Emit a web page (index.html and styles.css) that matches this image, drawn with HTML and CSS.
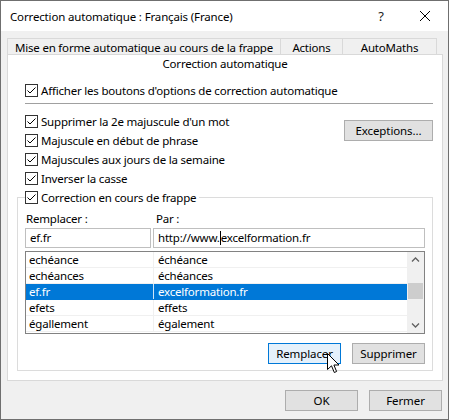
FILE: index.html
```html
<!DOCTYPE html>
<html>
<head>
    <meta charset="utf-8">
    <title>Correction automatique</title>
    <link rel="stylesheet" href="styles.css">
</head>
<body>
  <div class="window">
    <div class="titlebar">
      <span class="title">Correction automatique : Français (France)</span>
      <span class="help">?</span>
      <svg class="close" width="12" height="12" viewBox="0 0 12 12">
        <path d="M1 1 L11 11 M11 1 L1 11" stroke="#000" stroke-width="1" fill="none"/>
      </svg>
    </div>

    <div class="dialog-body">
      <div class="tab-row">
        <div class="tab tab-wide">Mise en forme automatique au cours de la frappe</div>
        <div class="tab tab-actions">Actions</div>
        <div class="tab tab-maths">AutoMaths</div>
      </div>

      <div class="panel">
        <div class="tab-current">Correction automatique</div>

        <label class="check check-top">
          <svg class="cb" width="13" height="13" viewBox="0 0 13 13"><rect x="0.5" y="0.5" width="12" height="12" fill="#fff" stroke="#333"/><path d="M2.5 6.5 L5 9 L10.5 3.5" stroke="#000" fill="none"/></svg>
          Afficher les boutons d'options de correction automatique
        </label>
        <div class="separator"></div>

        <div class="options">
          <div class="option-list">
            <label class="check">
              <svg class="cb" width="13" height="13" viewBox="0 0 13 13"><rect x="0.5" y="0.5" width="12" height="12" fill="#fff" stroke="#333"/><path d="M2.5 6.5 L5 9 L10.5 3.5" stroke="#000" fill="none"/></svg>
              Supprimer la 2e majuscule d'un mot
            </label>
            <label class="check">
              <svg class="cb" width="13" height="13" viewBox="0 0 13 13"><rect x="0.5" y="0.5" width="12" height="12" fill="#fff" stroke="#333"/><path d="M2.5 6.5 L5 9 L10.5 3.5" stroke="#000" fill="none"/></svg>
              Majuscule en début de phrase
            </label>
            <label class="check">
              <svg class="cb" width="13" height="13" viewBox="0 0 13 13"><rect x="0.5" y="0.5" width="12" height="12" fill="#fff" stroke="#333"/><path d="M2.5 6.5 L5 9 L10.5 3.5" stroke="#000" fill="none"/></svg>
              Majuscules aux jours de la semaine
            </label>
            <label class="check">
              <svg class="cb" width="13" height="13" viewBox="0 0 13 13"><rect x="0.5" y="0.5" width="12" height="12" fill="#fff" stroke="#333"/><path d="M2.5 6.5 L5 9 L10.5 3.5" stroke="#000" fill="none"/></svg>
              Inverser la casse
            </label>
          </div>
          <button class="btn btn-exceptions">Exceptions...</button>
        </div>

        <fieldset class="group">
          <legend class="check">
            <svg class="cb" width="13" height="13" viewBox="0 0 13 13"><rect x="0.5" y="0.5" width="12" height="12" fill="#fff" stroke="#333"/><path d="M2.5 6.5 L5 9 L10.5 3.5" stroke="#000" fill="none"/></svg>
            Correction en cours de frappe
          </legend>

          <div class="fields">
            <span class="field-label">Remplacer :</span>
            <span class="field-label field-label-par">Par :</span>
            <div class="input">ef.fr</div>
            <div class="input">http://www.<span class="caret"></span>excelformation.fr</div>
          </div>

          <div class="list">
            <div class="list-rows">
              <div class="row"><span class="col-a">echéance</span><span class="col-b">échéance</span></div>
              <div class="row"><span class="col-a">echéances</span><span class="col-b">échéances</span></div>
              <div class="row selected"><span class="col-a">ef.fr</span><span class="col-b">excelformation.fr</span></div>
              <div class="row"><span class="col-a">efets</span><span class="col-b">effets</span></div>
              <div class="row"><span class="col-a">égallement</span><span class="col-b">également</span></div>
            </div>
            <div class="scrollbar">
              <svg class="arrow" width="17" height="16" viewBox="0 0 17 16"><path d="M5 9.5 L8.5 6 L12 9.5" stroke="#606060" stroke-width="1.3" fill="none"/></svg>
              <div class="track"><div class="thumb"></div></div>
              <svg class="arrow" width="17" height="16" viewBox="0 0 17 16"><path d="M5 6.5 L8.5 10 L12 6.5" stroke="#606060" stroke-width="1.3" fill="none"/></svg>
            </div>
          </div>

          <div class="list-actions">
            <button class="btn btn-hover">Remplacer</button>
            <button class="btn">Supprimer</button>
          </div>
        </fieldset>
      </div>

      <div class="footer">
        <button class="btn">OK</button>
        <button class="btn">Fermer</button>
      </div>
    </div>

    <!-- mouse pointer over the Remplacer button -->
    <svg class="pointer" width="13" height="21" viewBox="0 0 13 21">
      <path d="M0.5 0.5 L0.5 16.5 L4.5 12.8 L7.3 19.5 L9.6 18.5 L6.9 12 L12 12 Z" fill="#fff" stroke="#000" stroke-width="1"/>
    </svg>
  </div>
</body>
</html>
```

FILE: styles.css
```css
/* Windows style dialog: Correction automatique */
* {
    box-sizing: border-box;
}

body {
    margin: 0;
    font-family: 'Noto Sans', 'DejaVu Sans', sans-serif;
    font-size: 11.5px;
    letter-spacing: -0.2px;
    color: #000;
    background: #f0f0f0;
}

.window {
    position: relative;
    width: 449px;
    height: 420px;
    border: 1px solid #6f6f6f;
    background: #f0f0f0;
    display: flex;
    flex-direction: column;
}

.titlebar {
    height: 30px;
    background: #fff;
    display: flex;
    align-items: center;
    padding: 0 0 0 9px;
}

.title {
    flex: 1;
    font-size: 11.5px;
    letter-spacing: -0.15px;
}

.help {
    width: 20px;
    text-align: center;
    margin-right: 28px;
    font-size: 13px;
    color: #222;
}

.close {
    margin-right: 17px;
}

.dialog-body {
    flex: 1;
    padding: 7px 6px 0 6px;
    display: flex;
    flex-direction: column;
}

/* tabs */
.tab-row {
    display: flex;
    height: 16px;
}

.tab {
    border: 1px solid #d9d9d9;
    border-bottom: none;
    padding-top: 1px;
    text-align: center;
    line-height: 15px;
    white-space: nowrap;
    background: #f0f0f0;
}

.tab-wide {
    width: 274px;
}

.tab-actions {
    width: 62px;
    border-left: none;
}

.tab-maths {
    width: 94px;
    border-left: none;
}

.panel {
    height: 327px;
    background: #fff;
    border: 1px solid #d9d9d9;
    padding: 0 9px;
    margin-right: -1px;
}

.tab-current {
    height: 19px;
    line-height: 17px;
    text-align: center;
}

/* checkboxes */
.check {
    display: flex;
    align-items: center;
    height: 19px;
    white-space: nowrap;
}

.cb {
    flex: none;
    margin-right: 3px;
}

.check-top {
    margin: 7px 0 0 8px;
}

.separator {
    height: 1px;
    background: #a0a0a0;
    margin: 3px 0 0 8px;
}

.options {
    display: flex;
    justify-content: space-between;
    align-items: flex-start;
    margin: 8px 0 0 8px;
}

.btn {
    font-family: inherit;
    font-size: 11.5px;
    letter-spacing: -0.1px;
    color: #000;
    width: 73px;
    height: 21px;
    padding: 0;
    background: #e1e1e1;
    border: 1px solid #adadad;
    border-radius: 0;
}

.btn-exceptions {
    width: 89px;
    margin-top: 8px;
}

.btn-hover {
    background: #e5f1fb;
    border-color: #0078d7;
}

/* group box */
.group {
    margin: 0;
    border: 1px solid #dcdcdc;
    padding: 0 7px 5px 7px;
    height: 183px;
}

.group legend {
    padding: 0 3px 0 0;
    margin-left: 0;
}

.fields {
    display: grid;
    grid-template-columns: 126px 1fr;
    column-gap: 2px;
    margin-top: 1px;
}

.field-label {
    height: 20px;
    padding: 3px 0 0 1px;
    line-height: 16px;
}

.field-label-par {
    padding-left: 3px;
}

.input {
    height: 20px;
    border: 1px solid #bfbfbf;
    padding: 0 4px;
    line-height: 17px;
    white-space: nowrap;
    overflow: hidden;
}

.caret {
    display: inline-block;
    width: 1px;
    height: 14px;
    background: #000;
    vertical-align: -3px;
}

/* list */
.list {
    display: flex;
    margin-top: 3px;
    height: 83px;
    border: 1px solid #828282;
}

.list-rows {
    flex: 1;
}

.row {
    display: flex;
    height: 16px;
    line-height: 15px;
    border-bottom: 1px solid #f0f0f0;
}

.col-a {
    width: 128px;
    padding-left: 3px;
    border-right: 1px solid #f0f0f0;
}

.col-b {
    flex: 1;
    padding-left: 4px;
}

.row.selected {
    background: #0078d7;
    color: #fff;
    border-color: #0078d7;
}

.row.selected .col-a {
    border-color: #cfe6f8;
}

.scrollbar {
    width: 17px;
    background: #f0f0f0;
    display: flex;
    flex-direction: column;
}

.arrow {
    flex: none;
}

.track {
    flex: 1;
    padding-top: 15px;
}

.thumb {
    height: 16px;
    margin: 0 1px;
    background: #cdcdcd;
}

.list-actions {
    display: flex;
    justify-content: flex-end;
    gap: 11px;
    margin-top: 9px;
}

/* footer */
.footer {
    display: flex;
    justify-content: flex-end;
    gap: 11px;
    margin-top: 9px;
}

.pointer {
    position: absolute;
    left: 326px;
    top: 352px;
}
```
